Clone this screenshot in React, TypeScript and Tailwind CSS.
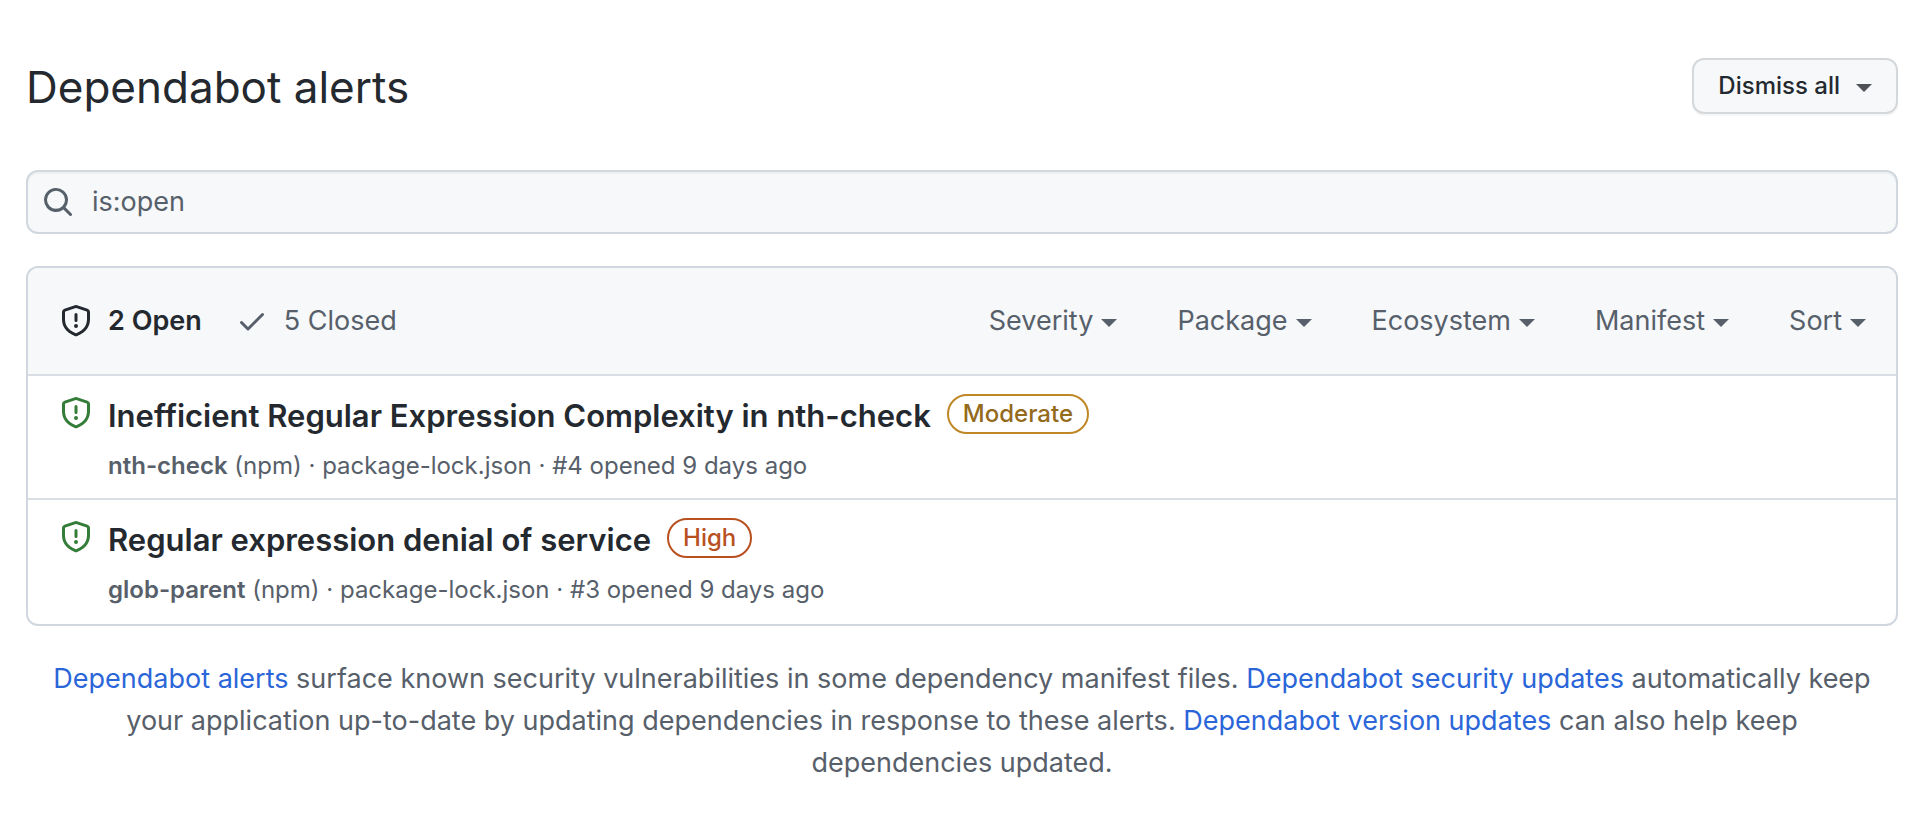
import type { ReactNode } from "react";

function ShieldIcon({ className }: { className: string }) {
  return (
    <svg aria-hidden="true" viewBox="0 0 16 16" className={`size-8 shrink-0 fill-current ${className}`}>
      <path
        fillRule="evenodd"
        d="M7.467.133a1.75 1.75 0 0 1 1.066 0l5.25 1.68A1.75 1.75 0 0 1 15 3.48V7c0 1.566-.32 3.182-1.303 4.682-.983 1.498-2.585 2.813-5.032 3.855a1.7 1.7 0 0 1-1.33 0c-2.447-1.042-4.049-2.357-5.032-3.855C1.32 10.182 1 8.566 1 7V3.48a1.75 1.75 0 0 1 1.217-1.667Zm.61 1.429a.25.25 0 0 0-.153 0l-5.25 1.68a.25.25 0 0 0-.174.238V7c0 1.358.275 2.666 1.057 3.86.784 1.194 2.121 2.34 4.366 3.297a.2.2 0 0 0 .154 0c2.245-.956 3.582-2.104 4.366-3.298C13.225 9.666 13.5 8.36 13.5 7V3.48a.25.25 0 0 0-.174-.237ZM8.75 4.75v3a.75.75 0 0 1-1.5 0v-3a.75.75 0 0 1 1.5 0ZM9 10.5a1 1 0 1 1-2 0 1 1 0 0 1 2 0Z"
      />
    </svg>
  );
}

function CheckIcon() {
  return (
    <svg aria-hidden="true" viewBox="0 0 16 16" className="size-8 shrink-0 fill-current">
      <path d="M13.78 4.22a.75.75 0 0 1 0 1.06l-7.25 7.25a.75.75 0 0 1-1.06 0L2.22 9.28a.75.75 0 0 1 1.06-1.06L6 10.94l6.72-6.72a.75.75 0 0 1 1.06 0Z" />
    </svg>
  );
}

function SearchIcon() {
  return (
    <svg aria-hidden="true" viewBox="0 0 16 16" className="size-8 shrink-0 fill-current">
      <path d="M10.68 11.74a6 6 0 0 1-7.922-8.982 6 6 0 0 1 8.982 7.922l3.04 3.04a.749.749 0 1 1-1.06 1.06ZM11.5 7a4.499 4.499 0 1 0-8.997 0A4.499 4.499 0 0 0 11.5 7Z" />
    </svg>
  );
}

function Caret() {
  return (
    <svg aria-hidden="true" viewBox="0 0 16 8" className="mt-1 h-2 w-4 shrink-0 fill-current">
      <path d="M0 0h16L8 8Z" />
    </svg>
  );
}

const filters = ["Severity", "Package", "Ecosystem", "Manifest", "Sort"];

const alerts = [
  {
    title: "Inefficient Regular Expression Complexity in nth-check",
    severity: "Moderate",
    tone: "border-[#bf8726] text-[#946a1c]",
    pkg: "nth-check",
    number: 4,
  },
  {
    title: "Regular expression denial of service",
    severity: "High",
    tone: "border-[#b8501f] text-[#b8501f]",
    pkg: "glob-parent",
    number: 3,
  },
];

function DocLink({ children }: { children: ReactNode }) {
  return (
    <a href="#docs" className="text-[#2b66d9]">
      {children}
    </a>
  );
}

export default function App() {
  return (
    <main className="bg-white pt-[58px] pr-[22px] pb-10 pl-[26px] font-['Inter','Liberation_Sans',sans-serif] text-[#24292f]">
      <header className="flex h-14 items-center justify-between">
        <h1 className="pt-0.5 text-[44px] leading-14">Dependabot alerts</h1>
        <button
          type="button"
          className="flex h-14 items-center gap-4 rounded-xl border-2 border-[#d5d8db] bg-[#f6f8fa] px-6 text-2xl font-medium shadow-[0_2px_0_rgba(27,31,36,0.04)]"
        >
          Dismiss all
          <span className="text-[#4f5358]">
            <Caret />
          </span>
        </button>
      </header>

      <label className="mt-14 flex h-16 items-center gap-[18px] rounded-xl border-2 border-[#d0d7de] bg-[#f6f8fa] px-3.5 text-[#57606a] shadow-[inset_0_2px_0_rgba(208,215,222,0.2)]">
        <SearchIcon />
        <input
          type="text"
          aria-label="Search alerts"
          defaultValue="is:open"
          className="min-w-0 flex-1 bg-transparent text-[27px] outline-none"
        />
      </label>

      <section className="mt-8 overflow-hidden rounded-xl border-2 border-[#d0d7de] pb-0.5">
        <div className="flex h-[106px] items-center justify-between bg-[#f6f8fa] pr-[30px] pl-8 text-[27px] text-[#57606a]">
          <div className="flex gap-[34px]">
            <a href="#open" className="flex items-center gap-4 font-semibold text-[#24292f]">
              <ShieldIcon className="" />2 Open
            </a>
            <a href="#closed" className="flex items-center gap-4">
              <CheckIcon />5 Closed
            </a>
          </div>
          <div className="flex gap-15">
            {filters.map((name) => (
              <button key={name} type="button" className="flex items-center gap-2">
                {name}
                <Caret />
              </button>
            ))}
          </div>
        </div>
        <ul>
          {alerts.map((alert) => (
            <li key={alert.number} className="flex gap-4 border-t-2 border-[#d8dee4] px-8 pt-[18px] pb-3.5">
              <ShieldIcon className="mt-[3px] text-[#347d39]" />
              <div>
                <div className="flex items-start gap-4">
                  <a href="#alert" className="text-[31px] leading-11 font-semibold">
                    {alert.title}
                  </a>
                  <span
                    className={`flex h-10 items-center rounded-full border-2 px-3.5 text-2xl font-medium ${alert.tone}`}
                  >
                    {alert.severity}
                  </span>
                </div>
                <p className="mt-2.5 text-2xl leading-9 text-[#57606a]">
                  <strong className="font-semibold">{alert.pkg}</strong> (npm) · package-lock.json · #{alert.number} opened
                  9 days ago
                </p>
              </div>
            </li>
          ))}
        </ul>
      </section>

      <p className="mt-8 px-4 text-center text-[27px] leading-[42px] text-[#57606a]">
        <DocLink>Dependabot alerts</DocLink> surface known security vulnerabilities in some dependency manifest files.{" "}
        <DocLink>Dependabot security updates</DocLink> automatically keep your application up-to-date by updating
        dependencies in response to these alerts. <DocLink>Dependabot version updates</DocLink> can also help keep
        dependencies updated.
      </p>
    </main>
  );
}
